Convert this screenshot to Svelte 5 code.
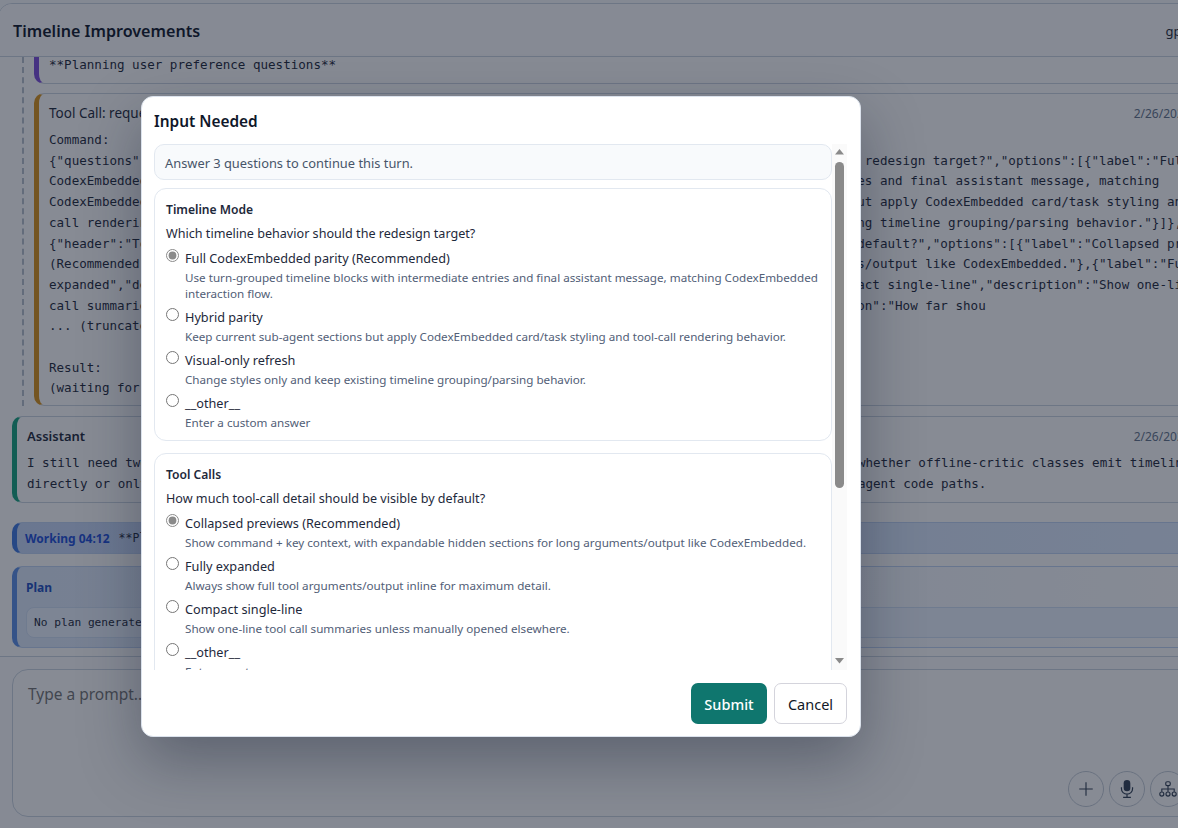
<script>
  const cmd = [
    'Command:',
    '{"questions":[{"header":"Timeline Mode","id":"timeline_mode","question":"Which timeline behavior should the redesign target?","options":[{"label":"Full',
    'CodexEmbedded parity (Recommended)","description":"Use turn-grouped timeline blocks with intermediate entries and final assistant message, matching',
    'CodexEmbedded interaction flow."},{"label":"Hybrid parity","description":"Keep current sub-agent sections but apply CodexEmbedded card/task styling and',
    'call rendering behavior."},{"label":"Visual-only refresh","description":"Change styles only and keep existing timeline grouping/parsing behavior."}]},',
    '{"header":"Tool Calls","id":"tool_call_display","question":"How much tool-call detail should be visible by default?","options":[{"label":"Collapsed pr',
    '(Recommended)","description":"Show command + key context, with expandable hidden sections for long arguments/output like CodexEmbedded."},{"label":"Fu',
    'expanded","description":"Always show full tool arguments/output inline for maximum detail."},{"label":"Compact single-line","description":"Show one-li',
    'call summaries unless manually opened elsewhere."}]},{"header":"Rollout Scope","id":"rollout_scope","question":"How far shou',
    '... (truncated)',
    '',
    'Result:',
    '(waiting for user input)'
  ].join('\n');

  const questions = [
    { header: 'Timeline Mode', name: 'mode', text: 'Which timeline behavior should the redesign target?', options: [
      { label: 'Full CodexEmbedded parity (Recommended)', desc: 'Use turn-grouped timeline blocks with intermediate entries and final assistant message, matching CodexEmbedded interaction flow.', on: true },
      { label: 'Hybrid parity', desc: 'Keep current sub-agent sections but apply CodexEmbedded card/task styling and tool-call rendering behavior.' },
      { label: 'Visual-only refresh', desc: 'Change styles only and keep existing timeline grouping/parsing behavior.' },
      { label: '__other__', desc: 'Enter a custom answer' }
    ]},
    { header: 'Tool Calls', name: 'tools', text: 'How much tool-call detail should be visible by default?', options: [
      { label: 'Collapsed previews (Recommended)', desc: 'Show command + key context, with expandable hidden sections for long arguments/output like CodexEmbedded.', on: true },
      { label: 'Fully expanded', desc: 'Always show full tool arguments/output inline for maximum detail.' },
      { label: 'Compact single-line', desc: 'Show one-line tool call summaries unless manually opened elsewhere.' },
      { label: '__other__', desc: 'Enter a custom answer' }
    ]}
  ];
</script>

<div class="root">
  <div class="frame">
    <header class="head">
      <h1>Timeline Improvements</h1>
      <span class="model">gpt-5.3-codex</span>
    </header>

    <div class="timeline">
      <div class="group">
        <div class="card reason">
          <pre>**Planning user preference questions**</pre>
        </div>
        <div class="card tool">
          <div class="card-head"><strong>Tool Call: request_user_input</strong><span class="date">2/26/2026, 7:43:12 PM</span></div>
          <pre>{cmd}</pre>
        </div>
      </div>

      <div class="card assistant">
        <div class="card-head"><strong>Assistant</strong><span class="date">2/26/2026, 7:43:10 PM</span></div>
        <pre>I still need two preferences before I edit the renderer, and I also want to confirm in the sandbox test setup whether offline-critic classes emit timeline events
directly or only surface them after turn completes, because that decides how much we can share across the sub-agent code paths.</pre>
      </div>

      <div class="working"><b>Working 04:12</b><code>**Planning user preference questions**</code></div>

      <div class="plan">
        <div class="plan-title">Plan</div>
        <div class="plan-box">No plan generated yet.</div>
      </div>
    </div>

    <div class="composer">
      <div class="inputbox">
        <div class="placeholder">Type a prompt...</div>
        <div class="tools">
          <button class="round" aria-label="Attach">
            <svg width="18" height="18" viewBox="0 0 16 16" fill="none" stroke="currentColor" stroke-width="1"><path d="M8 2v12M2 8h12"/></svg>
          </button>
          <button class="round" aria-label="Voice">
            <svg width="18" height="20" viewBox="0 0 16 18" fill="currentColor"><rect x="5" y="1" width="6" height="10" rx="3"/><path d="M3 7.5v1.2a5 5 0 0 0 10 0V7.5" fill="none" stroke="currentColor" stroke-width="1.1"/><path d="M8 14v2.5M4.5 16.6h7" fill="none" stroke="currentColor" stroke-width="1.1"/></svg>
          </button>
          <button class="round" aria-label="Agents">
            <svg width="18" height="18" viewBox="0 0 16 16" fill="none" stroke="currentColor" stroke-width="1"><rect x="6" y="1.5" width="4" height="3.5" rx="1.2"/><circle cx="2.5" cy="12.5" r="1.8"/><circle cx="8" cy="12.5" r="1.8"/><circle cx="13.5" cy="12.5" r="1.8"/><path d="M8 5v5.5M2.5 10.5V8h11v2.5"/></svg>
          </button>
        </div>
      </div>
    </div>
  </div>

  <div class="overlay">
    <div class="modal">
      <h2>Input Needed</h2>
      <div class="scrollwrap">
        <div class="scroll">
          <div class="summary">Answer 3 questions to continue this turn.</div>
          {#each questions as q}
            <section class="question">
              <h3>{q.header}</h3>
              <p class="qtext">{q.text}</p>
              {#each q.options as o}
                <label class="opt">
                  <input type="radio" name={q.name} checked={o.on} />
                  <span class="opt-body">
                    <span class="opt-label">{o.label}</span>
                    <span class="opt-desc">{o.desc}</span>
                  </span>
                </label>
              {/each}
            </section>
          {/each}
        </div>
        <div class="sbar" aria-hidden="true">
          <svg class="arrow" width="9" height="6" viewBox="0 0 9 6"><path d="M4.5 0 9 5.5H0z" fill="#8a8a8a"/></svg>
          <div class="thumb"></div>
          <svg class="arrow down" width="9" height="6" viewBox="0 0 9 6"><path d="M4.5 5.5 9 0H0z" fill="#8a8a8a"/></svg>
        </div>
      </div>
      <div class="actions">
        <button class="submit">Submit</button>
        <button class="cancel">Cancel</button>
      </div>
    </div>
  </div>
</div>

<style>
  :global(body) { margin: 0; background: #f8fafc; }
  .root { position: relative; width: 1178px; height: 828px; overflow: hidden; font-family: "Noto Sans", "Open Sans", sans-serif; color: #0f172a; }
  .frame { width: 1286px; height: 860px; margin-top: 3px; margin-left: -2px; box-sizing: border-box; border: 1px solid #cbd5e1; border-radius: 14px; background: #ffffff; display: flex; flex-direction: column; overflow: hidden; }
  .head { height: 50px; padding: 2px 34px 0 14px; flex: none; display: flex; align-items: center; justify-content: space-between; border-bottom: 1px solid #cbd5e1; background: #fdfdfe; }
  h1 { margin: 0; font-size: 16.1px; font-weight: 600; }
  .model { font-size: 13px; color: #1e293b; }
  .timeline { height: 599px; flex: none; padding: 0 13px; overflow: hidden; display: flex; flex-direction: column; box-sizing: border-box; }
  pre { margin: 0; font-family: "DejaVu Sans Mono", monospace; font-size: 12.56px; line-height: 20.7px; white-space: pre; color: #1e293b; }
  .group { margin-left: 10px; padding-left: 10px; border-left: 2px dashed #b6c0cd; }
  .card { border: 1px solid #cbd5e1; border-left-width: 5px; border-radius: 10px; background: #fff; padding: 8px 10px 7px; overflow: hidden; }
  .reason { border-left-color: #7c4ddb; margin-top: -40px; height: 67px; box-sizing: border-box; display: flex; align-items: flex-end; padding-bottom: 7px; }
  .tool { border-left-color: #d9921a; margin-top: 9px; height: 313px; box-sizing: border-box; }
  .card-head { display: flex; justify-content: space-between; align-items: center; font-size: 13.5px; height: 22px; margin-bottom: 6px; color: #334155; }
  .card-head strong { font-weight: 400; color: #1e293b; }
  .date { font-size: 12px; color: #64748b; }
  .assistant { border-left-color: #14a37f; margin-top: 10px; height: 87px; box-sizing: border-box; }
  .assistant .card-head { font-size: 13px; }
  .assistant strong { font-weight: 600; }
  .working { margin-top: 19px; height: 32px; box-sizing: border-box; border: 1px solid #bfd3f2; border-left: 5px solid #3f78e0; border-radius: 10px; background: linear-gradient(90deg, #c5d6f7, #e1edff); display: flex; align-items: center; gap: 9px; padding: 0 8px; font-size: 12px; }
  .working b { color: #1d4ed8; font-weight: 700; }
  .working code { font-family: "DejaVu Sans Mono", monospace; font-size: 11.5px; color: #1e293b; }
  .plan { margin-top: 12px; height: 82px; box-sizing: border-box; border: 1px solid #bfd3f2; border-left: 5px solid #5b8fe6; border-radius: 10px; background: linear-gradient(90deg, #dce8fb, #ffffff); padding: 11px 9px; }
  .plan-title { font-size: 12px; font-weight: 700; color: #1e4fc0; line-height: 20px; height: 20px; margin-bottom: 9px; }
  .plan-box { height: 31px; box-sizing: border-box; border: 1px solid #cfdef5; border-radius: 8px; background: #ebf3ff; padding: 0 7px; font-family: "DejaVu Sans Mono", monospace; font-size: 11.2px; line-height: 29px; color: #1e293b; }
  .composer { border-top: 1px solid #cbd5e1; padding: 12px 13px; flex: none; background: #fdfdfe; }
  .inputbox { height: 148px; box-sizing: border-box; border: 1px solid #cbd5e1; border-radius: 16px; background: #fff; padding: 14px 15px; position: relative; }
  .placeholder { font-size: 15.5px; color: #757575; line-height: 20px; }
  .tools { position: absolute; left: 1055px; top: 101px; display: flex; gap: 5px; }
  .round { width: 36px; height: 36px; border-radius: 50%; border: 1px solid #c3cbd6; background: transparent; padding: 0; display: flex; align-items: center; justify-content: center; color: #334155; }

  .overlay { position: absolute; inset: 0; background: rgba(15, 23, 42, 0.5); }
  .modal { position: absolute; left: 141px; top: 96px; width: 720px; height: 641px; box-sizing: border-box; background: #fff; border: 1px solid #dbe2ec; border-radius: 12px; box-shadow: 0 24px 60px rgba(15, 23, 42, 0.35); padding: 13px 13px 12px 12px; display: flex; flex-direction: column; }
  h2 { margin: 0 0 10px; font-size: 15.4px; font-weight: 600; line-height: 24px; color: #0f172a; flex: none; }
  .scrollwrap { flex: 1; min-height: 0; display: flex; }
  .scroll { flex: 1; min-width: 0; overflow: hidden; display: flex; flex-direction: column; gap: 8px; }
  .sbar { flex: none; width: 15px; background: #fafafa; display: flex; flex-direction: column; align-items: center; padding-top: 5px; padding-bottom: 6px; box-sizing: border-box; }
  .arrow { flex: none; }
  .arrow.down { margin-top: auto; }
  .thumb { flex: none; width: 9px; height: 326px; margin-top: 7px; border-radius: 5px; background: #8a8a8a; }
  .summary { flex: none; box-sizing: border-box; height: 36px; border: 1px solid #e2e8f0; border-radius: 10px; background: #f8fafc; padding: 0 10px; line-height: 36px; font-size: 12.85px; color: #475569; }
  .question { flex: none; border: 1px solid #e2e8f0; border-radius: 12px; padding: 12px 11px 5px; margin-bottom: 4px; }
  h3 { margin: 0 0 5px; font-size: 12.1px; font-weight: 600; line-height: 18px; color: #1e293b; }
  .qtext { margin: 0 0 3px; font-size: 12.6px; line-height: 20px; color: #1e293b; }
  .opt { display: flex; gap: 6px; align-items: flex-start; margin-bottom: 4px; }
  .opt input { margin: 2px 0 0; width: 13px; height: 13px; accent-color: #8a8a8a; flex: none; }
  .opt-body { display: flex; flex-direction: column; }
  .opt-label { font-size: 12.7px; line-height: 22px; color: #1e293b; }
  .opt-desc { font-size: 11.66px; line-height: 16px; margin-top: 1px; color: #526077; }
  .actions { flex: none; display: flex; justify-content: flex-end; gap: 7px; margin-top: 13px; }
  .actions button { height: 41px; border-radius: 7px; font-family: inherit; font-size: 14.5px; }
  .submit { width: 76px; border: 0; background: #0f766e; color: #fff; font-weight: 500; padding: 0; }
  .cancel { width: 73px; border: 1px solid #d4d4dc; background: #fff; color: #111827; padding: 0; }
</style>
